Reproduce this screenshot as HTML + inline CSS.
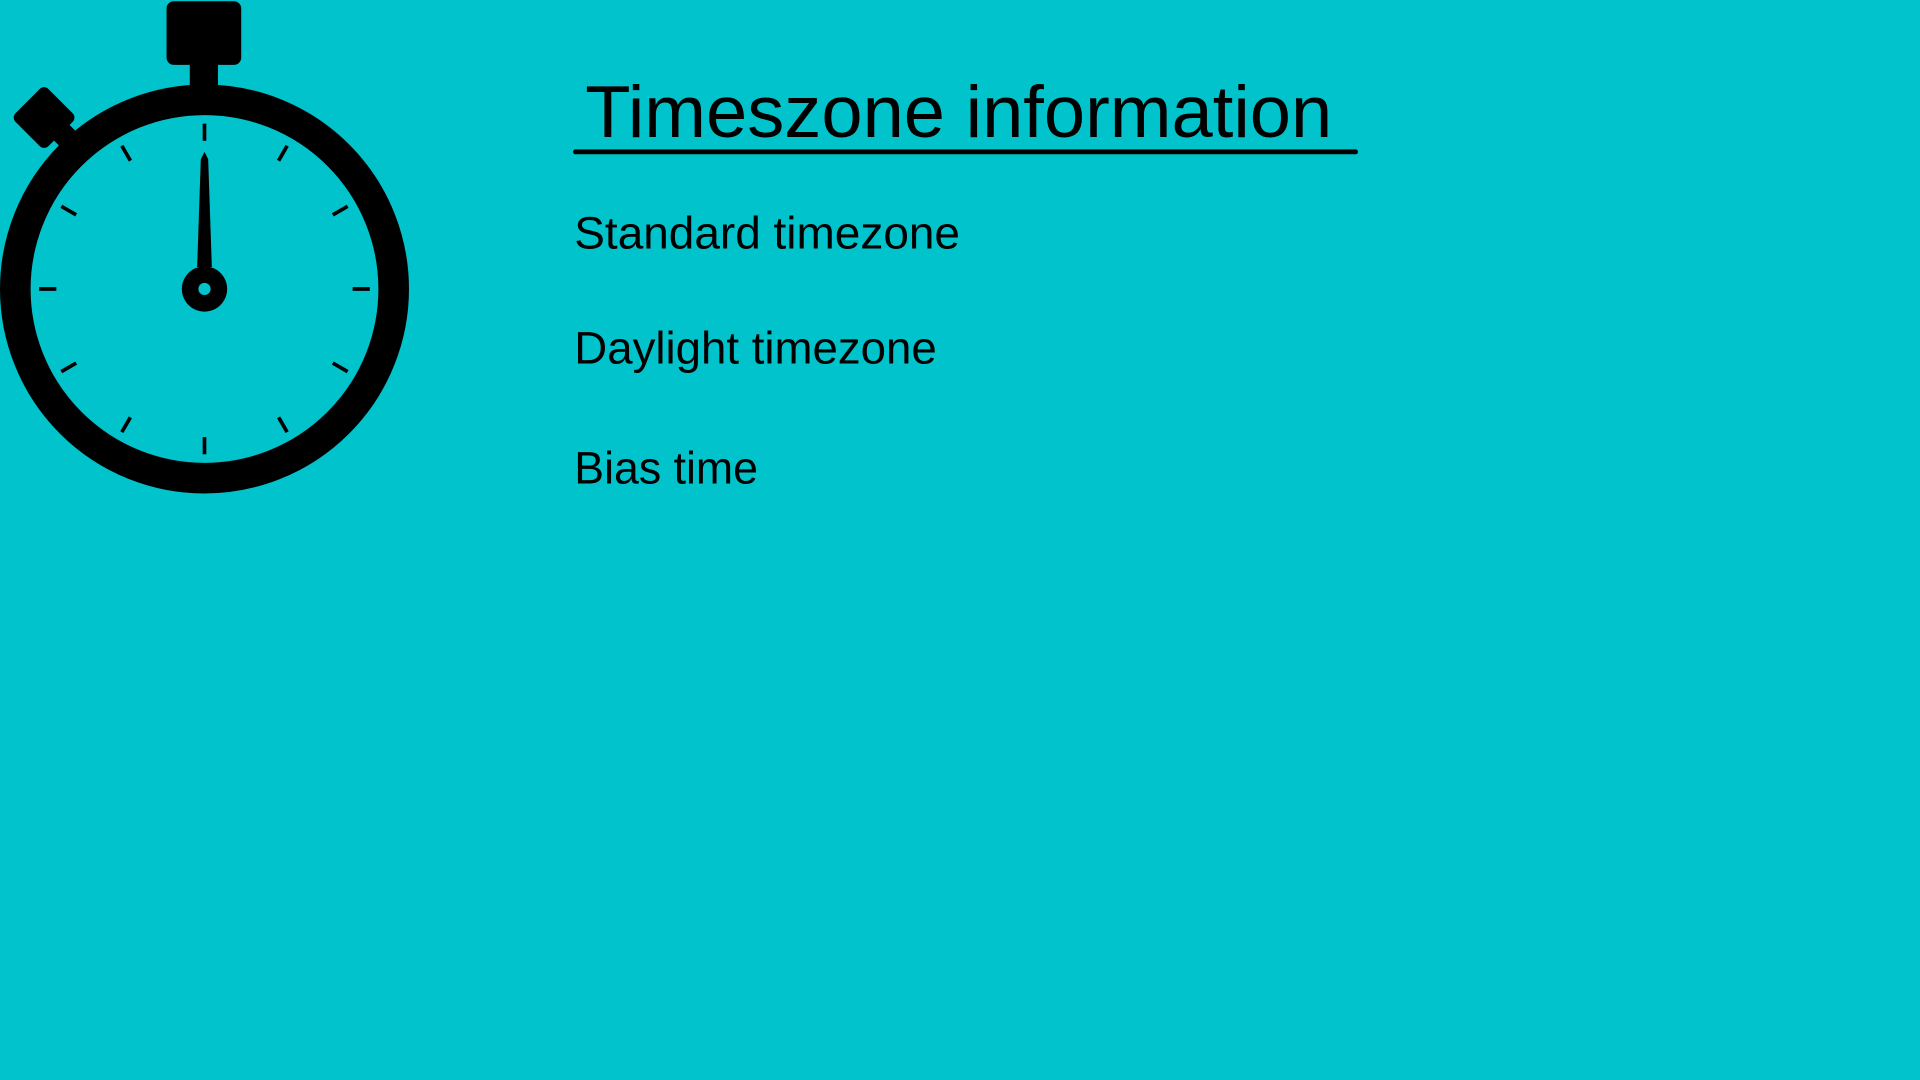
<!DOCTYPE html>
<html><head><meta charset="utf-8"><style>html,body{margin:0;padding:0;background:#00c3cc;overflow:hidden}svg{display:block}</style></head>
<body>
<svg width="1920" height="1080" viewBox="0 0 1568 882" xmlns="http://www.w3.org/2000/svg">
<rect width="1568" height="882" fill="#00c3cc"/>
<g fill="#000">
<rect x="136" y="1" width="61" height="52" rx="6"/>
<rect x="155" y="50" width="23" height="24"/>
<g transform="rotate(45 36 96)"><rect x="17" y="77" width="38" height="38" rx="5"/></g>
<g transform="rotate(45 52 110)"><rect x="45" y="101" width="14" height="18"/></g>
<circle cx="167" cy="236" r="154.5" fill="none" stroke="#000" stroke-width="25"/>
<path d="M167 124 L170 130 L173 218 L161 218 L164 130 Z"/>
<circle cx="167" cy="236" r="18.5"/>
<circle cx="167" cy="236" r="5" fill="#00c3cc"/>
</g>
<g stroke="#000" stroke-width="3" transform="translate(167 236)">
<line x1="0" y1="-121" x2="0" y2="-135"/>
<line x1="0" y1="-121" x2="0" y2="-135" transform="rotate(30)"/>
<line x1="0" y1="-121" x2="0" y2="-135" transform="rotate(60)"/>
<line x1="0" y1="-121" x2="0" y2="-135" transform="rotate(90)"/>
<line x1="0" y1="-121" x2="0" y2="-135" transform="rotate(120)"/>
<line x1="0" y1="-121" x2="0" y2="-135" transform="rotate(150)"/>
<line x1="0" y1="-121" x2="0" y2="-135" transform="rotate(180)"/>
<line x1="0" y1="-121" x2="0" y2="-135" transform="rotate(210)"/>
<line x1="0" y1="-121" x2="0" y2="-135" transform="rotate(240)"/>
<line x1="0" y1="-121" x2="0" y2="-135" transform="rotate(270)"/>
<line x1="0" y1="-121" x2="0" y2="-135" transform="rotate(300)"/>
<line x1="0" y1="-121" x2="0" y2="-135" transform="rotate(330)"/>
</g>
<g font-family="Liberation Sans, sans-serif" fill="#000">
<text x="478" y="112" font-size="60" textLength="610" lengthAdjust="spacingAndGlyphs">Timeszone information</text>
<text x="469" y="203" font-size="37" textLength="315" lengthAdjust="spacingAndGlyphs">Standard timezone</text>
<text x="469" y="297" font-size="37" textLength="296" lengthAdjust="spacingAndGlyphs">Daylight timezone</text>
<text x="469" y="395" font-size="37" textLength="150" lengthAdjust="spacingAndGlyphs">Bias time</text>
</g>
<rect x="468" y="122" width="641" height="4" rx="2" fill="#000"/>
</svg>
</body></html>
